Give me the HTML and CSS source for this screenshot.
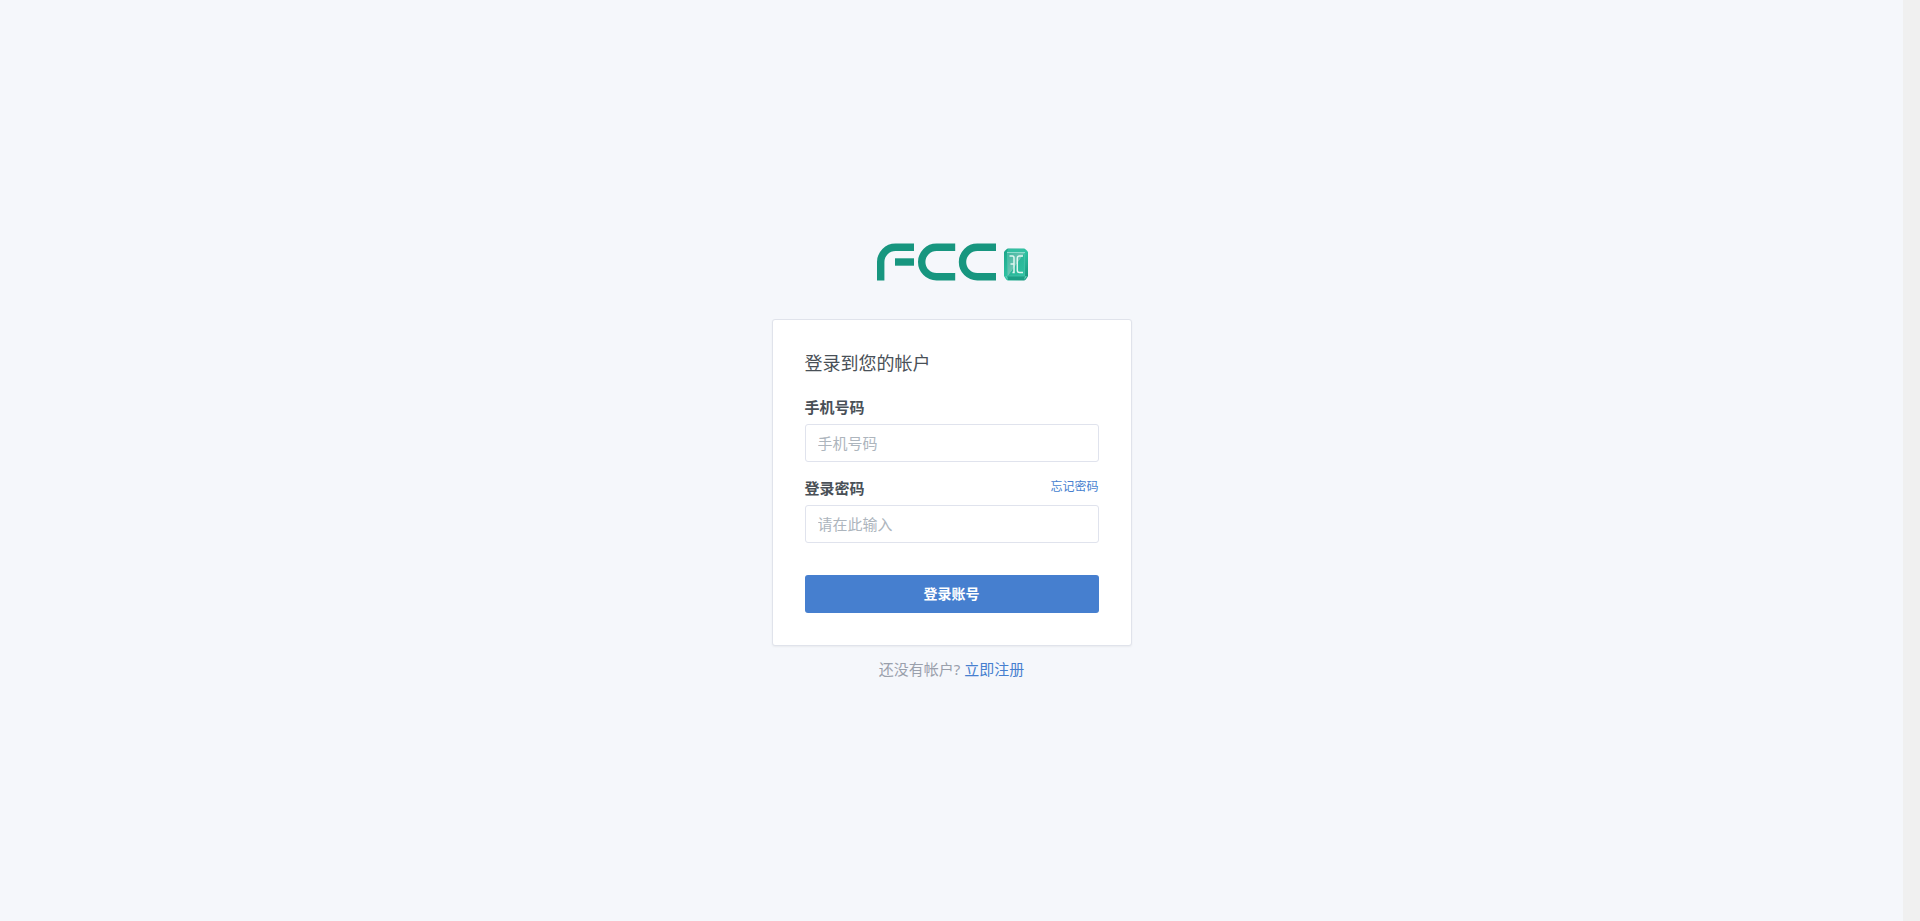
FILE: index.html
```html
<!DOCTYPE html>
<html lang="zh-CN">
<head>
<meta charset="utf-8">
<title>FCC</title>
<link rel="stylesheet" href="styles.css">
</head>
<body class="page">
<main class="page-main">
  <div class="login">
    <svg class="logo" viewBox="0 0 152 48" role="img" aria-label="FCC">
      <defs>
        <linearGradient id="rim" x1="0" y1="0" x2="1" y2="1">
          <stop offset="0" stop-color="#1ba287"/>
          <stop offset=".5" stop-color="#2fc4a3"/>
          <stop offset="1" stop-color="#149078"/>
        </linearGradient>
        <linearGradient id="face" x1="0" y1="0" x2="1" y2="1">
          <stop offset="0" stop-color="#3fb79f"/>
          <stop offset=".5" stop-color="#6cc4b2"/>
          <stop offset=".52" stop-color="#2bb799"/>
          <stop offset="1" stop-color="#2cc3a2"/>
        </linearGradient>
      </defs>
      <g fill="none" stroke="#17967f" stroke-width="7.400">
        <path d="M4.700 41.500V23A14.800 14.800 0 0 1 19.500 8.200H38"/>
        <path d="M19 23H38"/>
        <path d="M79.200 8.200H60.500A14.800 14.800 0 0 0 60.500 37.800H79.200"/>
        <path d="M120 8.200H101.300A14.800 14.800 0 0 0 101.300 37.800H120"/>
      </g>
      <path d="M132 9.500H148Q149.500 9.500 152 13V37Q149.500 41.500 148 41.500H132Q130.500 41.500 128 37V13Q130.500 9.500 132 9.500Z" fill="url(#rim)"/>
      <path d="M132 10H148L149 13H131Z" fill="#34bfa2"/>
      <path d="M131 37H149L148 41H132Z" fill="#1c9f85"/>
      <path d="M129 37.500L131 37L132 41ZM151 37.500L149 37L148 41Z" fill="#5ccdb7"/>
      <rect x="131.500" y="13.500" width="17" height="23.500" fill="url(#face)" stroke="#48c2aa" stroke-width=".8"/>
      <path d="M131 13.500H149" stroke="#8edccd"/>
      <g fill="none" stroke="#e0f6f1" stroke-width="1.500">
        <path d="M133.500 17H136.500Q138 17 138 19V33.500H136.500M134.500 25H138"/>
        <path d="M147 17H143.500Q141.300 17 141.300 19V31.500Q141.300 33.500 143.500 33.500H147"/>
      </g>
    </svg>
    <form class="card">
      <h1 class="card-title">登录到您的帐户</h1>
      <div class="field">
        <label class="label" for="phone">手机号码</label>
        <input class="input" id="phone" type="text" placeholder="手机号码">
      </div>
      <div class="field">
        <div class="label-row">
          <label class="label" for="password">登录密码</label>
          <a class="forgot" href="#">忘记密码</a>
        </div>
        <input class="input" id="password" type="password" placeholder="请在此输入">
      </div>
      <button class="submit" type="submit">登录账号</button>
    </form>
    <p class="register">还没有帐户? <a class="link" href="#">立即注册</a></p>
  </div>
</main>
<div class="gutter"></div>
</body>
</html>
```
FILE: styles.css
```css
* {
  box-sizing: border-box;
}

.page {
  display: flex;
  min-height: 100vh;
  margin: 0;
  background: #f5f7fb;
  color: #495057;
  font-family: "Noto Sans", "Noto Sans CJK SC", sans-serif;
  font-size: 15px;
  line-height: 22px;
}

.page-main {
  flex: 1;
  display: flex;
  align-items: center;
  justify-content: center;
  padding-bottom: 2px;
}

.gutter {
  flex: none;
  width: 17px;
  background: #f0f0f0;
}

.login {
  width: 100%;
  max-width: 360px;
}

.logo {
  display: block;
  width: 152px;
  margin: 0 auto 32px;
}

.card {
  padding: 32px;
  background: #fff;
  border: 1px solid #e0e3eb;
  border-radius: 3px;
  box-shadow: 0 1px 2px rgba(0, 0, 0, 0.05);
}

.card-title {
  margin: 0 0 22px;
  font-size: 18px;
  font-weight: 400;
  line-height: 22px;
}

.field {
  margin-bottom: 15px;
}

.label-row {
  display: flex;
  justify-content: space-between;
}

.label {
  display: block;
  margin-bottom: 6px;
  font-weight: 600;
}

.forgot {
  color: #467fcf;
  font-size: 12px;
  line-height: 20px;
  text-decoration: none;
}

.input {
  display: block;
  width: 100%;
  height: 38px;
  padding: 0 12px;
  border: 1px solid #e0e3ed;
  border-radius: 3px;
  background: #fff;
  color: #495057;
  font: inherit;
}

.input::placeholder {
  color: #adb5bd;
  opacity: 1;
}

.submit {
  display: block;
  width: 100%;
  height: 38px;
  margin-top: 32px;
  padding: 0;
  border: 0;
  border-radius: 3px;
  background: #467fcf;
  color: #fff;
  font: inherit;
  font-size: 14px;
  font-weight: 600;
}

.register {
  margin: 12px 0 0;
  color: #9aa0ac;
  text-align: center;
}

.link {
  color: #467fcf;
  text-decoration: none;
}
```
